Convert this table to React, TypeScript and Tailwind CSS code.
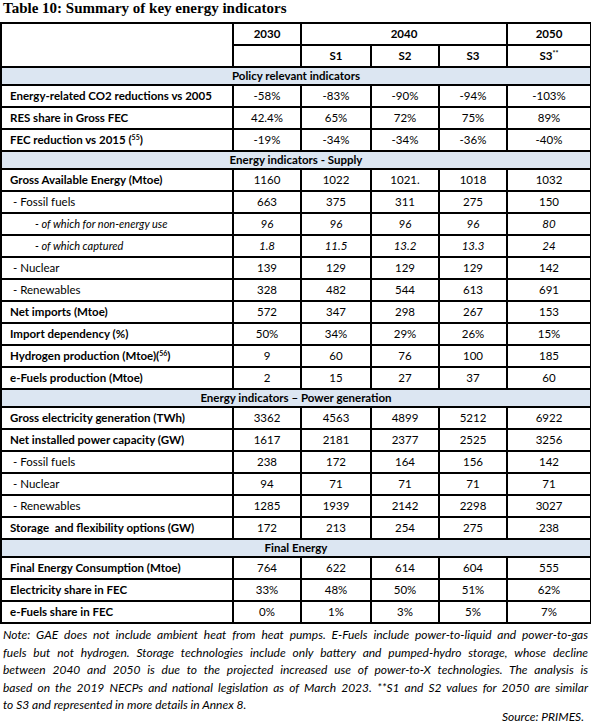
import React from "react";

type Kind = "bold" | "indent" | "sub" | "section";
type Row = { label: React.ReactNode; vals?: string[]; kind: Kind };

const Sup = ({ children }: { children: React.ReactNode }) => (
  <span className="relative top-[-4px] text-[7px] leading-none">{children}</span>
);

const rows: Row[] = [
  { label: "Policy relevant indicators", kind: "section" },
  { label: "Energy-related CO2 reductions vs 2005", vals: ["-58%", "-83%", "-90%", "-94%", "-103%"], kind: "bold" },
  { label: "RES share in Gross FEC", vals: ["42.4%", "65%", "72%", "75%", "89%"], kind: "bold" },
  {
    label: (
      <>
        FEC reduction vs 2015 (<Sup>55</Sup>)
      </>
    ),
    vals: ["-19%", "-34%", "-34%", "-36%", "-40%"],
    kind: "bold",
  },
  { label: "Energy indicators - Supply", kind: "section" },
  { label: "Gross Available Energy (Mtoe)", vals: ["1160", "1022", "1021.", "1018", "1032"], kind: "bold" },
  { label: "- Fossil fuels", vals: ["663", "375", "311", "275", "150"], kind: "indent" },
  { label: "- of which for non-energy use", vals: ["96", "96", "96", "96", "80"], kind: "sub" },
  { label: "- of which captured", vals: ["1.8", "11.5", "13.2", "13.3", "24"], kind: "sub" },
  { label: "- Nuclear", vals: ["139", "129", "129", "129", "142"], kind: "indent" },
  { label: "- Renewables", vals: ["328", "482", "544", "613", "691"], kind: "indent" },
  { label: "Net imports (Mtoe)", vals: ["572", "347", "298", "267", "153"], kind: "bold" },
  { label: "Import dependency (%)", vals: ["50%", "34%", "29%", "26%", "15%"], kind: "bold" },
  {
    label: (
      <>
        Hydrogen production (Mtoe)(<Sup>56</Sup>)
      </>
    ),
    vals: ["9", "60", "76", "100", "185"],
    kind: "bold",
  },
  { label: "e-Fuels production (Mtoe)", vals: ["2", "15", "27", "37", "60"], kind: "bold" },
  { label: "Energy indicators – Power generation", kind: "section" },
  { label: "Gross electricity generation (TWh)", vals: ["3362", "4563", "4899", "5212", "6922"], kind: "bold" },
  { label: "Net installed power capacity (GW)", vals: ["1617", "2181", "2377", "2525", "3256"], kind: "bold" },
  { label: "- Fossil fuels", vals: ["238", "172", "164", "156", "142"], kind: "indent" },
  { label: "- Nuclear", vals: ["94", "71", "71", "71", "71"], kind: "indent" },
  { label: "- Renewables", vals: ["1285", "1939", "2142", "2298", "3027"], kind: "indent" },
  { label: "Storage\u00a0 and flexibility options (GW)", vals: ["172", "213", "254", "275", "238"], kind: "bold" },
  { label: "Final Energy", kind: "section" },
  { label: "Final Energy Consumption (Mtoe)", vals: ["764", "622", "614", "604", "555"], kind: "bold" },
  { label: "Electricity share in FEC", vals: ["33%", "48%", "50%", "51%", "62%"], kind: "bold" },
  { label: "e-Fuels share in FEC", vals: ["0%", "1%", "3%", "5%", "7%"], kind: "bold" },
];

const cellFont = { fontFamily: 'Lato, "Liberation Sans", sans-serif' };

const noteLines = [
  "Note: GAE does not include ambient heat from heat pumps. E-Fuels include power-to-liquid and power-to-gas",
  "fuels but not hydrogen. Storage technologies include only battery and pumped-hydro storage, whose decline",
  "between 2040 and 2050 is due to the projected increased use of power-to-X technologies. The analysis is",
  "based on the 2019 NECPs and national legislation as of March 2023. **S1 and S2 values for 2050 are similar",
];

export default function App() {
  return (
    <div className="w-[591px] bg-white text-black">
      <div
        className="pl-[3px] h-[22px] text-[15px] font-bold leading-[17px]"
        style={{ fontFamily: '"Liberation Serif", "Times New Roman", serif' }}
      >
        Table 10: Summary of key energy indicators
      </div>
      <table className="table-fixed border-collapse w-[590px]" style={cellFont}>
        <colgroup>
          <col className="w-[232px]" />
          <col className="w-[68px]" />
          <col className="w-[70px]" />
          <col className="w-[68px]" />
          <col className="w-[68px]" />
          <col className="w-[84px]" />
        </colgroup>
        <thead>
          <tr className="h-[22px]">
            <th rowSpan={2} className="border-2 border-black"></th>
            <th className="border-2 border-black font-bold text-[11.5px] p-0">2030</th>
            <th colSpan={3} className="border-2 border-black font-bold text-[11.5px] p-0">2040</th>
            <th className="border-2 border-black font-bold text-[11.5px] p-0">2050</th>
          </tr>
          <tr className="h-[22px]">
            <th className="border-2 border-black p-0"></th>
            <th className="border-2 border-black font-bold text-[11.5px] p-0">S1</th>
            <th className="border-2 border-black font-bold text-[11.5px] p-0">S2</th>
            <th className="border-2 border-black font-bold text-[11.5px] p-0">S3</th>
            <th className="border-2 border-black font-bold text-[11.5px] p-0">
              S3<span className="relative top-[-4px] text-[7px] leading-none">**</span>
            </th>
          </tr>
        </thead>
        <tbody>
          {rows.map((r, i) => {
            if (r.kind === "section") {
              return (
                <tr key={i} className="h-[18px]">
                  <td colSpan={6} className="border-2 border-black bg-[#dce6f2] text-center font-bold text-[11.5px] p-0 leading-[14px]">
                    {r.label}
                  </td>
                </tr>
              );
            }
            const labelCls =
              r.kind === "bold"
                ? "font-bold pl-[8px] text-[11.5px]"
                : r.kind === "indent"
                ? "pl-[11px] text-[11.5px]"
                : "pl-[33px] italic text-[11px]";
            return (
              <tr key={i} className="h-[22px]">
                <td className={`border-2 border-black p-0 text-left whitespace-nowrap ${labelCls}`}>{r.label}</td>
                {r.vals!.map((v, j) => (
                  <td
                    key={j}
                    className={`border-2 border-black p-0 text-center text-[11.5px] ${r.kind === "sub" ? "italic" : ""}`}
                  >
                    {v}
                  </td>
                ))}
              </tr>
            );
          })}
        </tbody>
      </table>
      <div className="px-[3px] pt-[2px] italic text-[12px] leading-[17.6px]" style={cellFont}>
        {noteLines.map((l, i) => (
          <div key={i} className="text-justify [text-align-last:justify] whitespace-nowrap">
            {l}
          </div>
        ))}
        <div>to S3 and represented in more details in Annex 8.</div>
        <div className="text-right pr-[4px] mt-[-4px] leading-[13px]">Source: PRIMES.</div>
      </div>
    </div>
  );
}
